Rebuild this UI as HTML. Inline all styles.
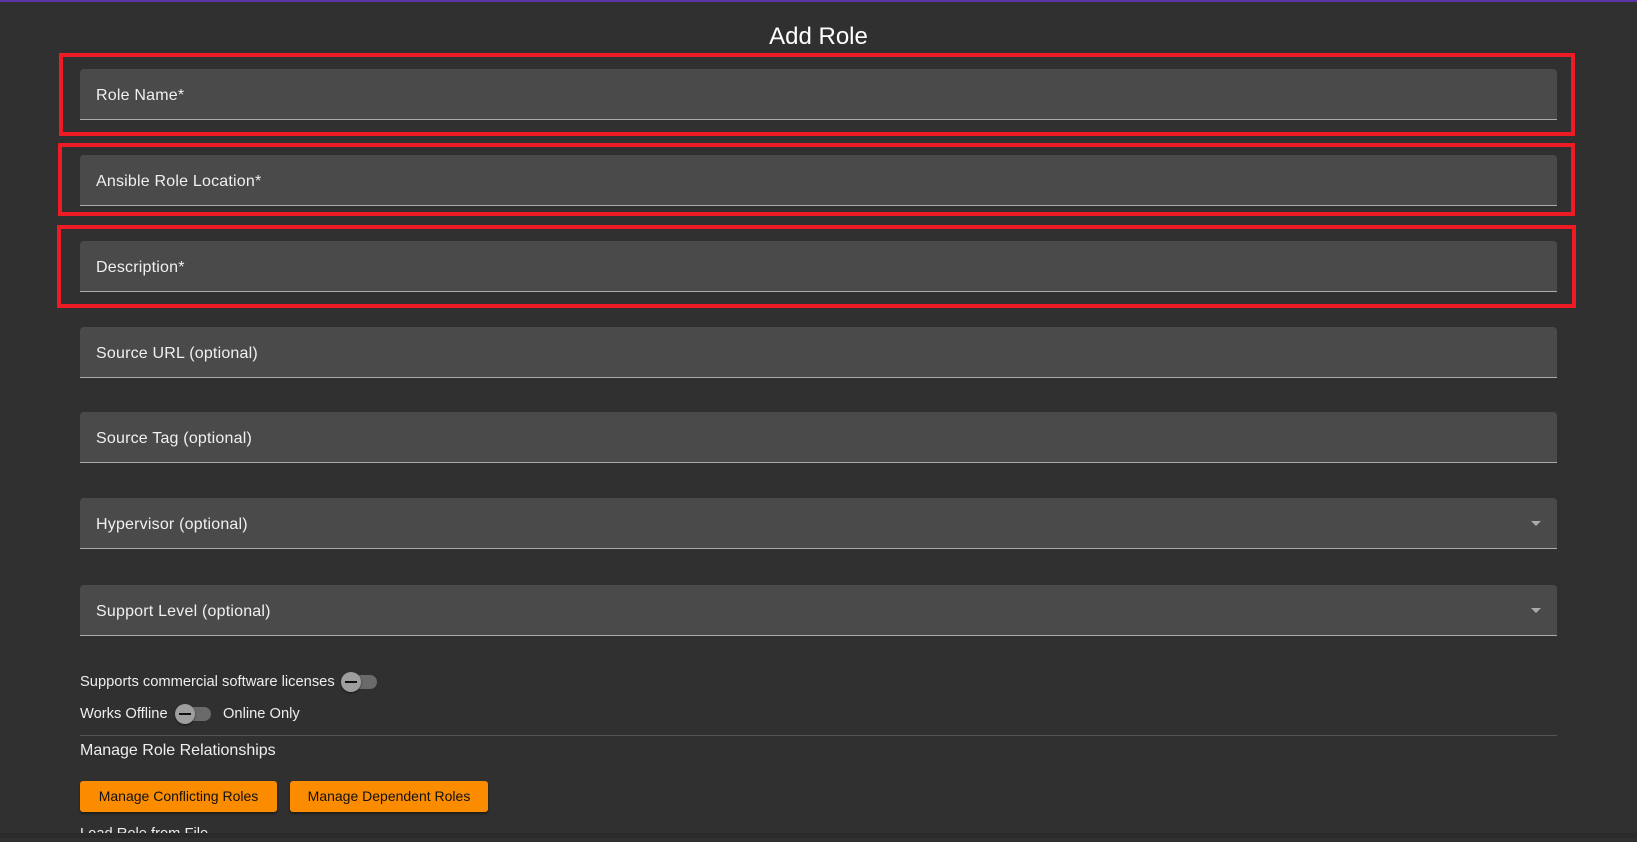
<!DOCTYPE html>
<html><head><style>
html,body{margin:0;padding:0;}
body{width:1637px;height:838px;background:#303030;position:relative;overflow:hidden;font-family:"Liberation Sans",Roboto,sans-serif;color:#fff;}
.top{position:absolute;left:0;top:0;width:1637px;height:2px;background:#5b35a8;}
h1{position:absolute;left:0;width:1637px;text-align:center;top:23px;margin:0;font-weight:400;font-size:24px;}
.f{position:absolute;left:80px;width:1477px;height:51px;background:#4a4a4a;border-radius:4px 4px 0 0;border-bottom:1.5px solid #aaa;box-sizing:border-box;}
.f span{position:absolute;left:16px;top:18px;font-size:16px;color:#f0f0f0;letter-spacing:.2px;}
.arr{position:absolute;right:16px;top:23px;width:0;height:0;border-left:5px solid transparent;border-right:5px solid transparent;border-top:5px solid #aaa;}
.r{position:absolute;border:4px solid #ed1c24;box-sizing:border-box;}
.t{position:absolute;font-size:14.7px;color:#eee;}
.tg{position:absolute;width:34px;height:14px;border-radius:7px;background:#6a6a6a;}
.tg i{position:absolute;left:-2px;top:-3px;width:20px;height:20px;border-radius:50%;background:#9e9e9e;box-shadow:0 1px 2px rgba(0,0,0,.5);}
.tg i:after{content:"";position:absolute;left:4px;top:9px;width:12px;height:2px;background:#111;}
.btn{position:absolute;top:781px;height:31px;background:#fb8c00;border-radius:3px;color:#111;font-size:14px;text-align:center;line-height:31px;box-shadow:0 2px 2px rgba(0,0,0,.4);}
</style></head><body>
<div class="top"></div>
<h1>Add Role</h1>
<div class="r" style="left:59px;top:53px;width:1516px;height:83px"></div>
<div class="r" style="left:58px;top:143px;width:1517px;height:73px"></div>
<div class="r" style="left:57px;top:225px;width:1519px;height:83px"></div>
<div class="f" style="top:69px"><span>Role Name*</span></div>
<div class="f" style="top:155px"><span>Ansible Role Location*</span></div>
<div class="f" style="top:241px"><span>Description*</span></div>
<div class="f" style="top:327px"><span>Source URL (optional)</span></div>
<div class="f" style="top:412px"><span>Source Tag (optional)</span></div>
<div class="f" style="top:498px"><span>Hypervisor (optional)</span><div class="arr"></div></div>
<div class="f" style="top:585px"><span>Support Level (optional)</span><div class="arr"></div></div>
<div class="t" style="left:80px;top:674px">Supports commercial software licenses</div>
<div class="tg" style="left:343px;top:675px"><i></i></div>
<div class="t" style="left:80px;top:706px">Works Offline</div>
<div class="tg" style="left:177px;top:707px"><i></i></div>
<div class="t" style="left:223px;top:706px">Online Only</div>
<div style="position:absolute;left:80px;top:735px;width:1477px;height:1px;background:#555"></div>
<div style="position:absolute;left:80px;top:742px;font-size:16px;color:#eee">Manage Role Relationships</div>
<div class="btn" style="left:80px;width:197px">Manage Conflicting Roles</div>
<div class="btn" style="left:290px;width:198px">Manage Dependent Roles</div>
<div class="t" style="left:80px;top:826px">Load Role from File</div>
<div style="position:absolute;left:0;top:833px;width:1637px;height:5px;background:#2a2a2a"></div>
</body></html>
